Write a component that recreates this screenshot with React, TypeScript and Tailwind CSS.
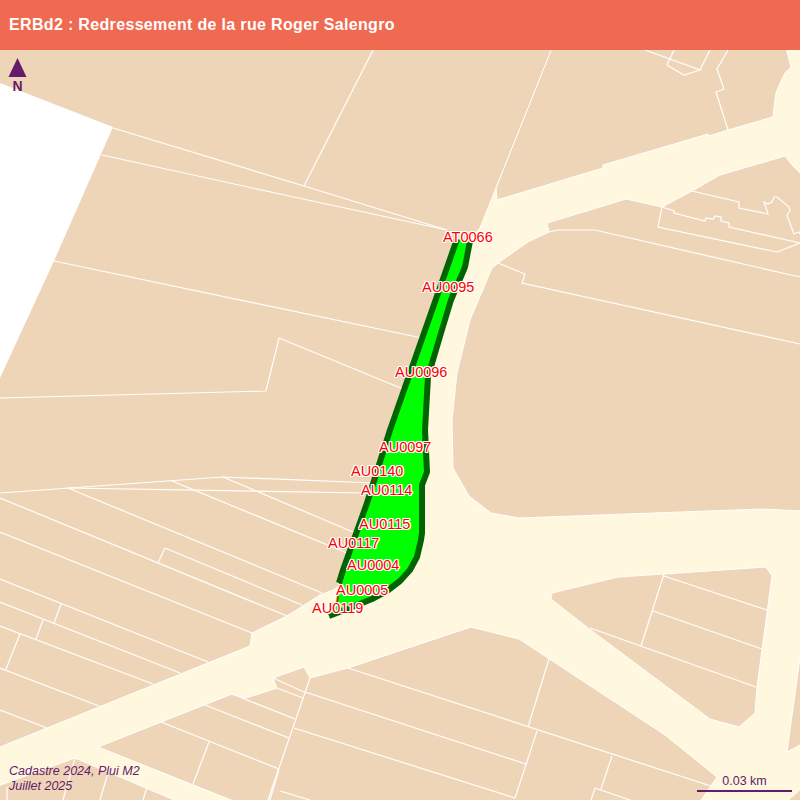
const parcels = [
  // west block, runs along the left side of the green zone
  '-2,48 552,48 552,50 496,188 480,228 472,238 466,240 457,239 390,430 367,503 343,570 338,587 333,590 320,595 287,616 252,633 250,646 0,747 -2,748',
  // north-east block
  '552,48 786,48 791,67 785,73 780,83 776,93 774,107 773,117 728,130 709,136 708,134 603,165 603,168 497,200 496,188',
  // east block
  '549,232 547,223 600,207 626,199 662,207 692,191 720,175 785,156 792,165 802,175 802,511 762,509 519,518 491,513 469,496 453,468 452,420 457,373 470,320 492,268 498,263 528,242',
  // south-east blocks
  '552,593 551,599 588,628 710,719 739,727 755,713 757,687 772,576 766,567 664,574 618,577',
  '802,643 787,752 802,744',
  '802,788 786,802 802,802',
  // south block
  '98,747 232,694 246,698 277,688 273,678 304,667 310,678 348,668 471,627 519,639 665,735 717,777 700,802 236,802',
  // bottom left
  '-2,786 75,758 179,802 -2,802',
]

const lines = [
  // west block
  '113,128 304,186 447,230',
  '102,155 280,194 447,230',
  '304,186 373,50',
  '54,261 422,338',
  '0,398 266,391 279,338 403,389',
  '0,493 223,477 375,483',
  '67,488 365,493',
  '68,488 322,593',
  '172,481 347,553',
  '223,477 353,532',
  '0,498 287,616',
  '165,548 302,605',
  '165,548 158,563',
  '0,532 252,633',
  '0,579 208,662',
  '0,602 180,673',
  '0,626 153,684',
  '0,668 99,706',
  '0,710 47,728',
  '61,604 54,623',
  '43,620 36,639',
  '20,634 6,669',
  // north-east block
  '645,50 700,70 684,75 667,65 674,50',
  '710,50 700,70',
  '728,50 717,69 724,89 716,92 728,130',
  // east block
  '549,232 557,230 595,230 800,277',
  '662,207 658,227 777,252 800,243',
  '662,207 674,211 674,213 705,221 706,218 713,219 715,216 721,217 721,221 729,223 729,227 800,243',
  '692,191 739,202 739,208 768,214 764,202 768,204 772,202 774,197 777,197 789,207 790,211 787,215 788,218 794,234 799,232 800,234',
  '498,263 525,274 522,283 800,344',
  // south-east
  '664,574 641,646',
  '664,576 767,610',
  '653,611 762,649',
  '590,628 756,687',
  // south block
  '232,694 295,719',
  '205,705 289,738',
  '161,722 279,769',
  '209,742 193,784',
  '279,769 270,800',
  '277,688 303,698',
  '273,678 304,692',
  '310,678 268,800',
  '348,668 717,788',
  '305,692 526,764',
  '294,728 515,798',
  '280,791 310,800',
  '549,659 528,727',
  '537,731 515,798',
  '612,756 601,789',
  '595,788 591,800',
  '595,788 630,800',
  // bottom left
  '7,787 7,800',
  '75,758 63,800',
  '108,773 100,800',
  '147,787 143,800',
]

// outline stays open on the lower left, where only the thin red edge is drawn
const zoneOutline =
  '339,583 343,570 367,503 390,430 457,239 M470,241 465,267 451,300 441,333 428,377 425,430 427,472 422,485 422,533 421,540 417,557 410,570 400,581 387,591 372,599 355,606 329,616'

const zoneFill =
  '457,239 390,430 367,503 343,570 339,583 335,606 329,616 355,606 372,599 387,591 400,581 410,570 417,557 421,540 422,533 422,485 427,472 425,430 428,377 441,333 451,300 465,267 470,241'

const labels = [
  { text: 'AT0066', pos: 'left-[443px] top-[179px]' },
  { text: 'AU0095', pos: 'left-[422px] top-[229px]' },
  { text: 'AU0096', pos: 'left-[395px] top-[314px]' },
  { text: 'AU0097', pos: 'left-[379px] top-[389px]' },
  { text: 'AU0140', pos: 'left-[351px] top-[413px]' },
  { text: 'AU0114', pos: 'left-[361px] top-[432px]' },
  { text: 'AU0115', pos: 'left-[359px] top-[466px]' },
  { text: 'AU0117', pos: 'left-[328px] top-[485px]' },
  { text: 'AU0004', pos: 'left-[347px] top-[507px]' },
  { text: 'AU0005', pos: 'left-[336px] top-[532px]' },
  { text: 'AU0119', pos: 'left-[312px] top-[550px]' },
]

export default function App() {
  return (
    <div className="flex h-[800px] w-[800px] flex-col overflow-hidden font-['Liberation_Sans',Arial,sans-serif]">
      <div className="z-10 flex h-[50px] shrink-0 items-center bg-[#f06a52] pl-[9px] text-[16px] font-bold tracking-[0.336px] text-white">
        ERBd2 : Redressement de la rue Roger Salengro
      </div>

      <div className="relative flex-1 bg-[#fff7de]">
        <svg viewBox="0 50 800 750" className="block h-[750px] w-[800px]">
          {parcels.map((points, i) => (
            <polygon key={i} points={points} fill="#eed5b8" stroke="#ffffff" strokeWidth="1" />
          ))}
          <polygon points="0,83 113,127 54,261 0,378" fill="#ffffff" />
          {lines.map((points, i) => (
            <polyline key={i} points={points} fill="none" stroke="#ffffff" strokeWidth="1.2" />
          ))}
          <polygon points={zoneFill} fill="#00ff00" />
          {zoneOutline.split(' M').map((points, i) => (
            <polyline key={i} points={points} fill="none" stroke="#006400" strokeWidth="6" strokeLinejoin="round" />
          ))}
          <path d="M340 583l-3 22M375 478l-2 4" fill="none" stroke="#ff0000" strokeWidth="1.5" />
        </svg>

        {/* north arrow */}
        <div className="absolute left-[8px] top-[8px] flex w-[19px] flex-col items-center text-[#651a6b]">
          <svg width="19" height="20" viewBox="0 0 19 20" className="block">
            <polygon points="9.5,0 18.5,19 0.5,19" fill="currentColor" />
          </svg>
          <span className="text-[14px] font-bold leading-[17px]">N</span>
        </div>

        {labels.map((label) => (
          <span
            key={label.text}
            className={`absolute text-[14.5px] leading-[16px] text-[#ff0000] [text-shadow:1px_0_0_#fff,-1px_0_0_#fff,0_1px_0_#fff,0_-1px_0_#fff,1px_1px_0_#fff,-1px_-1px_0_#fff,1px_-1px_0_#fff,-1px_1px_0_#fff] ${label.pos}`}
          >
            {label.text}
          </span>
        ))}

        {/* credits */}
        <div className="absolute bottom-[6px] left-[9px] text-[12.5px] italic leading-[15px] text-[#651a6b]">
          <div>Cadastre 2024, Plui M2</div>
          <div>Juillet 2025</div>
        </div>

        {/* scale bar */}
        <div className="absolute bottom-[8px] right-[8px] w-[95px] border-b-2 border-[#651a6b] text-center text-[12.5px] leading-[18px] text-[#651a6b]">
          0.03 km
        </div>
      </div>
    </div>
  )
}
